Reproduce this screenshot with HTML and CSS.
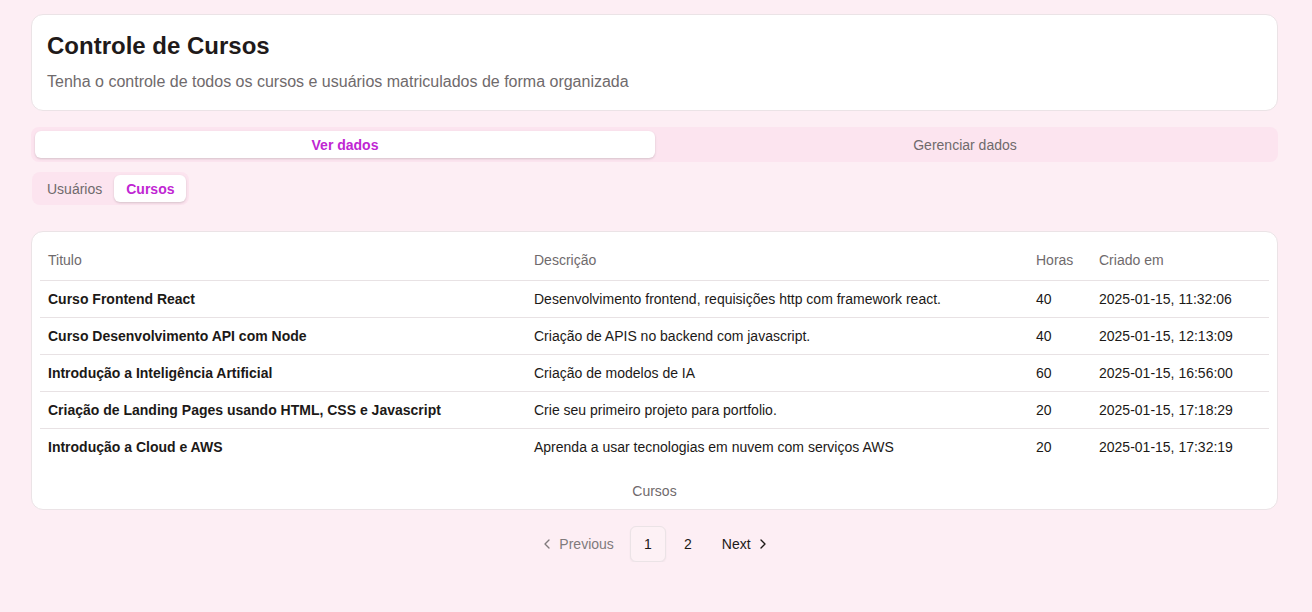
FILE: index.html
```html
<!DOCTYPE html>
<html lang="pt-BR">
<head>
<meta charset="utf-8">
<title>Controle de Cursos</title>
<link rel="stylesheet" href="styles.css">
</head>
<body>
<main class="page">
  <section class="card header-card">
    <h1 class="title">Controle de Cursos</h1>
    <p class="subtitle">Tenha o controle de todos os cursos e usuários matriculados de forma organizada</p>
  </section>

  <div class="tabs-list">
    <button class="tab active">Ver dados</button>
    <button class="tab">Gerenciar dados</button>
  </div>

  <div class="subtabs">
    <button class="subtab">Usuários</button>
    <button class="subtab active">Cursos</button>
  </div>

  <section class="card table-card">
    <table class="table">
      <colgroup>
        <col class="c1"><col class="c2"><col class="c3"><col class="c4">
      </colgroup>
      <thead>
        <tr><th>Titulo</th><th>Descrição</th><th>Horas</th><th>Criado em</th></tr>
      </thead>
      <tbody>
        <tr><td class="strong">Curso Frontend React</td><td>Desenvolvimento frontend, requisições http com framework react.</td><td>40</td><td>2025-01-15, 11:32:06</td></tr>
        <tr><td class="strong">Curso Desenvolvimento API com Node</td><td>Criação de APIS no backend com javascript.</td><td>40</td><td>2025-01-15, 12:13:09</td></tr>
        <tr><td class="strong">Introdução a Inteligência Artificial</td><td>Criação de modelos de IA</td><td>60</td><td>2025-01-15, 16:56:00</td></tr>
        <tr><td class="strong">Criação de Landing Pages usando HTML, CSS e Javascript</td><td>Crie seu primeiro projeto para portfolio.</td><td>20</td><td>2025-01-15, 17:18:29</td></tr>
        <tr><td class="strong">Introdução a Cloud e AWS</td><td>Aprenda a usar tecnologias em nuvem com serviços AWS</td><td>20</td><td>2025-01-15, 17:32:19</td></tr>
      </tbody>
      <caption class="caption">Cursos</caption>
    </table>
  </section>

  <nav class="pagination">
    <a class="page-link prev"><svg width="16" height="16" viewBox="0 0 24 24" fill="none" stroke="currentColor" stroke-width="2" stroke-linecap="round" stroke-linejoin="round"><path d="m15 18-6-6 6-6"/></svg>Previous</a>
    <a class="page-link num current">1</a>
    <a class="page-link num">2</a>
    <a class="page-link next">Next<svg width="16" height="16" viewBox="0 0 24 24" fill="none" stroke="currentColor" stroke-width="2" stroke-linecap="round" stroke-linejoin="round"><path d="m9 18 6-6-6-6"/></svg></a>
  </nav>
</main>
</body>
</html>
```

FILE: styles.css
```css
* { box-sizing: border-box; }
html, body { margin: 0; padding: 0; }
body {
  background: #fdeef4;
  font-family: "Liberation Sans", Arial, sans-serif;
  color: #1c1917;
}
.page {
  padding: 14px 34px 0 31px;
  display: flex;
  flex-direction: column;
}
.card {
  background: #ffffff;
  border: 1px solid #ebe3e6;
  border-radius: 12px;
}
.header-card {
  padding: 17px 15px 18px 15px;
  height: 97px;
}
.title {
  margin: 0;
  font-size: 24px;
  line-height: 28px;
  font-weight: 700;
  color: #1f1a1a;
}
.subtitle {
  margin: 12px 0 0 0;
  font-size: 16px;
  line-height: 20px;
  color: #6f6a6c;
}
.tabs-list {
  margin-top: 16px;
  height: 35px;
  background: #fce4ef;
  border-radius: 8px;
  padding: 4px 3px 4px 4px;
  display: grid;
  grid-template-columns: 1fr 1fr;
}
.tab, .subtab {
  border: 0;
  background: transparent;
  font-family: inherit;
  font-size: 14px;
  color: #6f6a6c;
  border-radius: 6px;
  cursor: pointer;
  padding: 0;
}
.tab { height: 27px; }
.tab.active, .subtab.active {
  background: #ffffff;
  color: #c026d3;
  font-weight: 700;
  box-shadow: 0 1px 3px rgba(0,0,0,0.1), 0 1px 2px rgba(0,0,0,0.06);
}
.subtabs {
  margin-top: 10px;
  margin-left: 1px;
  align-self: flex-start;
  display: flex;
  gap: 0;
  height: 33px;
  padding: 3px 3px;
  background: #fce4ef;
  border-radius: 8px;
}
.subtab {
  height: 27px;
  padding: 0 12px;
}
.table-card {
  margin-top: 26px;
  padding: 8px;
}
.table {
  width: 100%;
  border-collapse: collapse;
  caption-side: bottom;
  font-size: 14px;
  table-layout: fixed;
}
.c1 { width: 486px; }
.c2 { width: 502px; }
.c3 { width: 63px; }
.c4 { width: auto; }
.table th {
  height: 40px;
  padding: 0 8px;
  text-align: left;
  font-weight: 400;
  color: #6f6a6c;
  vertical-align: middle;
}
.table thead tr { border-bottom: 1px solid #e8e2e4; }
.table td {
  padding: 8px;
  line-height: 20px;
  color: #1c1917;
  white-space: nowrap;
}
.table tbody tr { border-bottom: 1px solid #e8e2e4; }
.table tbody tr:last-child { border-bottom: 0; }
.table td.strong { font-weight: 700; }
.caption {
  margin-top: 16px;
  font-size: 14px;
  line-height: 20px;
  color: #6f6a6c;
}
.pagination {
  margin-top: 16px;
  display: flex;
  justify-content: center;
  align-items: center;
  gap: 4px;
  font-size: 14px;
  padding-left: 1px;
}
.page-link {
  height: 36px;
  display: inline-flex;
  align-items: center;
  gap: 4px;
  border-radius: 6px;
  color: #1c1917;
  cursor: pointer;
}
.page-link.prev { color: #807a7c; padding: 0 12px 0 10px; }
.page-link.next { padding: 0 10px 0 12px; }
.page-link.num { width: 36px; justify-content: center; }
.page-link.current {
  border: 1px solid #ebe3e6;
  background: #fdf1f5;
  box-shadow: 0 1px 2px rgba(0,0,0,0.05);
}
```
